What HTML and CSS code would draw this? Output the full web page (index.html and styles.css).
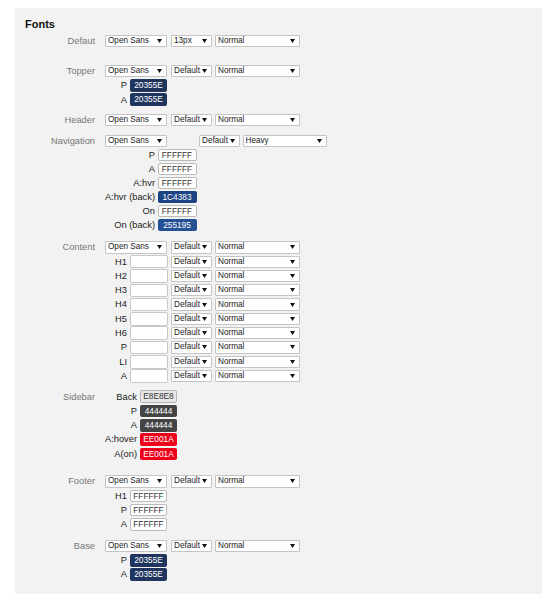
FILE: index.html
```html
<!DOCTYPE html>
<html lang="en">
<head>
    <meta charset="UTF-8">
    <meta name="viewport" content="width=device-width, initial-scale=1.0">
    <title>Fonts</title>
    <link rel="stylesheet" href="styles.css">
</head>
<body>
    <div class="panel">
        <h3>Fonts</h3>

        <!-- Default -->
        <div class="section section-first">
            <div class="label">Defaut</div>
            <div class="fields">
                <select class="family"><option>Open Sans</option></select>
                <select class="size"><option>13px</option></select>
                <select class="weight"><option>Normal</option></select>
            </div>
        </div>

        <!-- Topper -->
        <div class="section">
            <div class="label">Topper</div>
            <div class="fields">
                <select class="family"><option>Open Sans</option></select>
                <select class="size"><option>Default</option></select>
                <select class="weight"><option>Normal</option></select>
                <span class="key">P</span><span class="swatch navy">20355E</span>
                <span class="key">A</span><span class="swatch navy">20355E</span>
            </div>
        </div>

        <!-- Header -->
        <div class="section">
            <div class="label">Header</div>
            <div class="fields">
                <select class="family"><option>Open Sans</option></select>
                <select class="size"><option>Default</option></select>
                <select class="weight"><option>Normal</option></select>
            </div>
        </div>

        <!-- Navigation -->
        <div class="section section-nav">
            <div class="label">Navigation</div>
            <div class="fields fields-nav">
                <select class="family"><option>Open Sans</option></select>
                <select class="size"><option>Default</option></select>
                <select class="weight"><option>Heavy</option></select>
                <span class="key">P</span><span class="swatch light">FFFFFF</span>
                <span class="key">A</span><span class="swatch light">FFFFFF</span>
                <span class="key">A:hvr</span><span class="swatch light">FFFFFF</span>
                <span class="key">A:hvr (back)</span><span class="swatch blue">1C4383</span>
                <span class="key">On</span><span class="swatch light">FFFFFF</span>
                <span class="key">On (back)</span><span class="swatch blue2">255195</span>
            </div>
        </div>

        <!-- Content -->
        <div class="section">
            <div class="label">Content</div>
            <div class="fields">
                <select class="family"><option>Open Sans</option></select>
                <select class="size"><option>Default</option></select>
                <select class="weight"><option>Normal</option></select>
                <span class="key">H1</span><input type="text"><select class="size"><option>Default</option></select><select class="weight"><option>Normal</option></select>
                <span class="key">H2</span><input type="text"><select class="size"><option>Default</option></select><select class="weight"><option>Normal</option></select>
                <span class="key">H3</span><input type="text"><select class="size"><option>Default</option></select><select class="weight"><option>Normal</option></select>
                <span class="key">H4</span><input type="text"><select class="size"><option>Default</option></select><select class="weight"><option>Normal</option></select>
                <span class="key">H5</span><input type="text"><select class="size"><option>Default</option></select><select class="weight"><option>Normal</option></select>
                <span class="key">H6</span><input type="text"><select class="size"><option>Default</option></select><select class="weight"><option>Normal</option></select>
                <span class="key">P</span><input type="text"><select class="size"><option>Default</option></select><select class="weight"><option>Normal</option></select>
                <span class="key">LI</span><input type="text"><select class="size"><option>Default</option></select><select class="weight"><option>Normal</option></select>
                <span class="key">A</span><input type="text"><select class="size"><option>Default</option></select><select class="weight"><option>Normal</option></select>
            </div>
        </div>

        <!-- Sidebar -->
        <div class="section section-sidebar">
            <div class="label">Sidebar</div>
            <div class="fields fields-side">
                <span class="key">Back</span><span class="swatch grey">E8E8E8</span>
                <span class="key">P</span><span class="swatch dark">444444</span>
                <span class="key">A</span><span class="swatch dark">444444</span>
                <span class="key">A:hover</span><span class="swatch red">EE001A</span>
                <span class="key">A(on)</span><span class="swatch red">EE001A</span>
            </div>
        </div>

        <!-- Footer -->
        <div class="section section-footer">
            <div class="label">Footer</div>
            <div class="fields">
                <select class="family"><option>Open Sans</option></select>
                <select class="size"><option>Default</option></select>
                <select class="weight"><option>Normal</option></select>
                <span class="key">H1</span><span class="swatch light">FFFFFF</span>
                <span class="key">P</span><span class="swatch light">FFFFFF</span>
                <span class="key">A</span><span class="swatch light">FFFFFF</span>
            </div>
        </div>

        <!-- Base -->
        <div class="section">
            <div class="label">Base</div>
            <div class="fields">
                <select class="family"><option>Open Sans</option></select>
                <select class="size"><option>Default</option></select>
                <select class="weight"><option>Normal</option></select>
                <span class="key">P</span><span class="swatch navy">20355E</span>
                <span class="key">A</span><span class="swatch navy">20355E</span>
            </div>
        </div>
    </div>
</body>
</html>
```

FILE: styles.css
```css
body {
    margin: 0;
    font-family: "Liberation Sans", Arial, sans-serif;
    background-color: #fff;
}
.panel {
    margin: 8px 14px 0 15px;
    height: 586px;
    box-sizing: border-box;
    padding: 10px 10px 0 10px;
    background-color: #f2f2f2;
}
h3 {
    margin: 0 0 4px 0;
    font-size: 11px;
    line-height: 13px;
    color: #111;
}
.section {
    display: grid;
    grid-template-columns: 70px auto;
    column-gap: 10px;
    align-items: start;
    margin-bottom: 8.3px;
}
.section-first {
    margin-bottom: 17.7px;
}
.section-nav {
    margin-bottom: 10.3px;
}
.section-sidebar {
    margin-bottom: 15.3px;
}
.section-footer {
    margin-bottom: 9.3px;
}
.label {
    text-align: right;
    font-size: 9.3px;
    line-height: 12.3px;
    color: #777;
    white-space: nowrap;
}
.fields {
    display: grid;
    grid-template-columns: 22px 38px 41px 85px;
    grid-auto-rows: 12.3px;
    column-gap: 3px;
    row-gap: 2px;
    align-items: center;
    justify-items: start;
}
.fields-nav {
    grid-template-columns: 50px 39px 41px 84px;
    column-gap: 2.5px;
    row-gap: 1.7px;
}
.fields-side {
    grid-template-columns: 32px 38px;
}
.key {
    grid-column: 1;
    justify-self: end;
    font-size: 9.3px;
    line-height: 12.3px;
    color: #222;
    white-space: nowrap;
}
select {
    appearance: none;
    -webkit-appearance: none;
    box-sizing: border-box;
    height: 12.3px;
    margin: 0;
    padding: 0 0 0 2px;
    font-family: "Liberation Sans", Arial, sans-serif;
    font-size: 8.2px;
    line-height: 10px;
    color: #222;
    border: 1px solid #c4c4c4;
    border-radius: 1px;
    background: #fff url("data:image/svg+xml,%3Csvg xmlns='http://www.w3.org/2000/svg' width='5' height='4'%3E%3Cpath d='M0 0h5L2.5 4z' fill='%23111'/%3E%3C/svg%3E") no-repeat right 4px center;
}
select.family {
    grid-column: 1 / span 2;
    width: 62px;
}
select.size {
    grid-column: 3;
    width: 41px;
}
select.weight {
    grid-column: 4;
    width: 85px;
}
.fields-nav select.weight {
    width: 84px;
}
input[type="text"] {
    grid-column: 2;
    box-sizing: border-box;
    width: 38px;
    height: 13.5px;
    margin: 0;
    padding: 0;
    border: 1px solid #c8c8c8;
    border-radius: 2px;
    background-color: #fff;
}
.swatch {
    grid-column: 2;
    box-sizing: border-box;
    width: 37px;
    height: 12.5px;
    font-size: 8.3px;
    line-height: 12.5px;
    text-align: center;
    color: #fff;
    border-radius: 2px;
}
.fields-nav .swatch {
    width: 39px;
}
.navy {
    background-color: #20355e;
}
.blue {
    background-color: #1c4383;
}
.blue2 {
    background-color: #255195;
}
.dark {
    background-color: #444;
}
.red {
    background-color: #ee001a;
}
.light {
    background-color: #fff;
    color: #333;
    border: 1px solid #bbb;
    line-height: 10.5px;
}
.grey {
    background-color: #e8e8e8;
    color: #333;
    border: 1px solid #b5b5b5;
    line-height: 10.5px;
}
```
